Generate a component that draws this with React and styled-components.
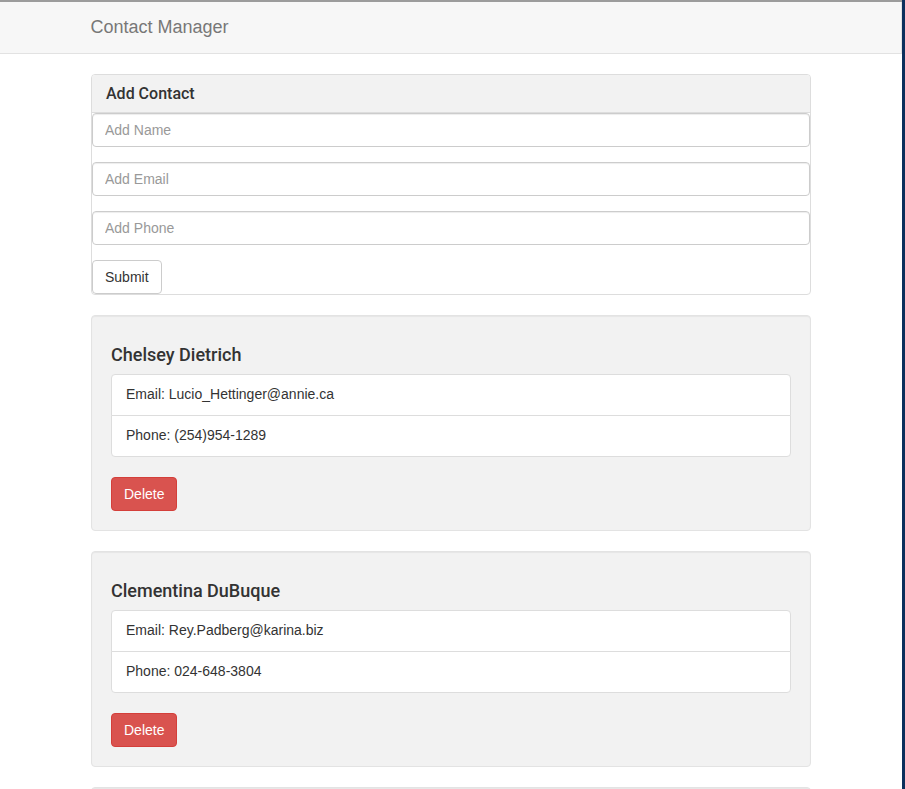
import React from 'react';
import styled, { createGlobalStyle } from 'styled-components';

const GlobalStyle = createGlobalStyle`
    html, body {
        margin:0;
        padding:0;
        background:#ffffff;
    }
    body {
        font-family:"Liberation Sans", Arial, sans-serif;
        font-size:14px;
        line-height:1.42857;
        color:#333333;
    }
    * { box-sizing:border-box; }
`;

const Page = styled.div`
    display:flex;
    min-height:789px;
`;

const Main = styled.div`
    flex:1;
    border-top:2px solid #9c9c9c;
`;

const Edge = styled.div`
    width:3px;
    background:#0c2f5c;
`;

const Navbar = styled.nav`
    height:52px;
    background:#f7f7f7;
    border-bottom:1px solid #e2e2e2;
    border-right:1px solid #e2e2e2;
    margin-bottom:20px;
`;

const Container = styled.div`
    width:750px;
    margin:0 auto;
    padding:0 15px;
`;

const Brand = styled.a`
    display:block;
    height:51px;
    line-height:51px;
    font-size:18px;
    color:#777777;
    text-decoration:none;
`;

const Panel = styled.div`
    background:#ffffff;
    border:1px solid #dddddd;
    border-radius:4px;
    margin-bottom:20px;
    overflow:hidden;
`;

const PanelHeading = styled.div`
    background:#f2f2f2;
    border-bottom:1px solid #dddddd;
    padding:10px 14px 9px;
    font-family:Roboto, "Liberation Sans", sans-serif;
    font-size:16px;
    font-weight:500;
    line-height:18px;
    color:#333333;
`;

const Form = styled.form`
    display:flex;
    flex-direction:column;
    align-items:flex-start;
`;

const Input = styled.input`
    display:block;
    width:100%;
    height:34px;
    padding:6px 12px;
    margin-bottom:15px;
    font-family:inherit;
    font-size:14px;
    color:#555555;
    background:#ffffff;
    border:1px solid #cccccc;
    border-radius:4px;
    box-shadow:inset 0 1px 1px rgba(0,0,0,0.075);
    &::placeholder { color:#999999; }
`;

const Button = styled.button`
    height:34px;
    padding:6px 12px;
    font-family:inherit;
    font-size:14px;
    line-height:20px;
    border-radius:4px;
    cursor:pointer;
    color:${p => p.danger ? '#ffffff' : '#333333'};
    background:${p => p.danger ? '#d9534f' : '#ffffff'};
    border:1px solid ${p => p.danger ? '#d43f3a' : '#cccccc'};
`;

const Well = styled.div`
    background:#f2f2f2;
    border:1px solid #e3e3e3;
    border-radius:4px;
    padding:19px;
    margin-bottom:20px;
    box-shadow:inset 0 1px 1px rgba(0,0,0,0.05);
`;

const Name = styled.h4`
    margin:10px 0 9px;
    font-family:Roboto, "Liberation Sans", sans-serif;
    font-size:18px;
    font-weight:500;
    line-height:20px;
    color:#333333;
`;

const List = styled.ul`
    list-style:none;
    margin:0 0 20px;
    padding:0;
`;

const Item = styled.li`
    background:#ffffff;
    border:1px solid #dddddd;
    padding:10px 14px;
    margin-bottom:-1px;
    &:first-child { border-radius:4px 4px 0 0; }
    &:last-child { border-radius:0 0 4px 4px; margin-bottom:0; }
`;

const contacts = [
    { id:1, name:'Chelsey Dietrich', email:'Lucio_Hettinger@annie.ca', phone:'(254)954-1289' },
    { id:2, name:'Clementina DuBuque', email:'Rey.Padberg@karina.biz', phone:'024-648-3804' },
    { id:3, name:'Glenna Reichert', email:'Chaim_McDermott@dana.io', phone:'(775)976-6794' },
];

export default function App() {
    return (
        <Page>
            <GlobalStyle />
            <Main>
                <Navbar>
                    <Container>
                        <Brand href="#">Contact Manager</Brand>
                    </Container>
                </Navbar>
                <Container>
                    <Panel>
                        <PanelHeading>Add Contact</PanelHeading>
                        <Form onSubmit={e => e.preventDefault()}>
                            <Input placeholder="Add Name" />
                            <Input placeholder="Add Email" />
                            <Input placeholder="Add Phone" />
                            <Button type="submit">Submit</Button>
                        </Form>
                    </Panel>
                    {contacts.map(c => (
                        <Well key={c.id}>
                            <Name>{c.name}</Name>
                            <List>
                                <Item>Email: {c.email}</Item>
                                <Item>Phone: {c.phone}</Item>
                            </List>
                            <Button danger>Delete</Button>
                        </Well>
                    ))}
                </Container>
            </Main>
            <Edge />
        </Page>
    );
}
